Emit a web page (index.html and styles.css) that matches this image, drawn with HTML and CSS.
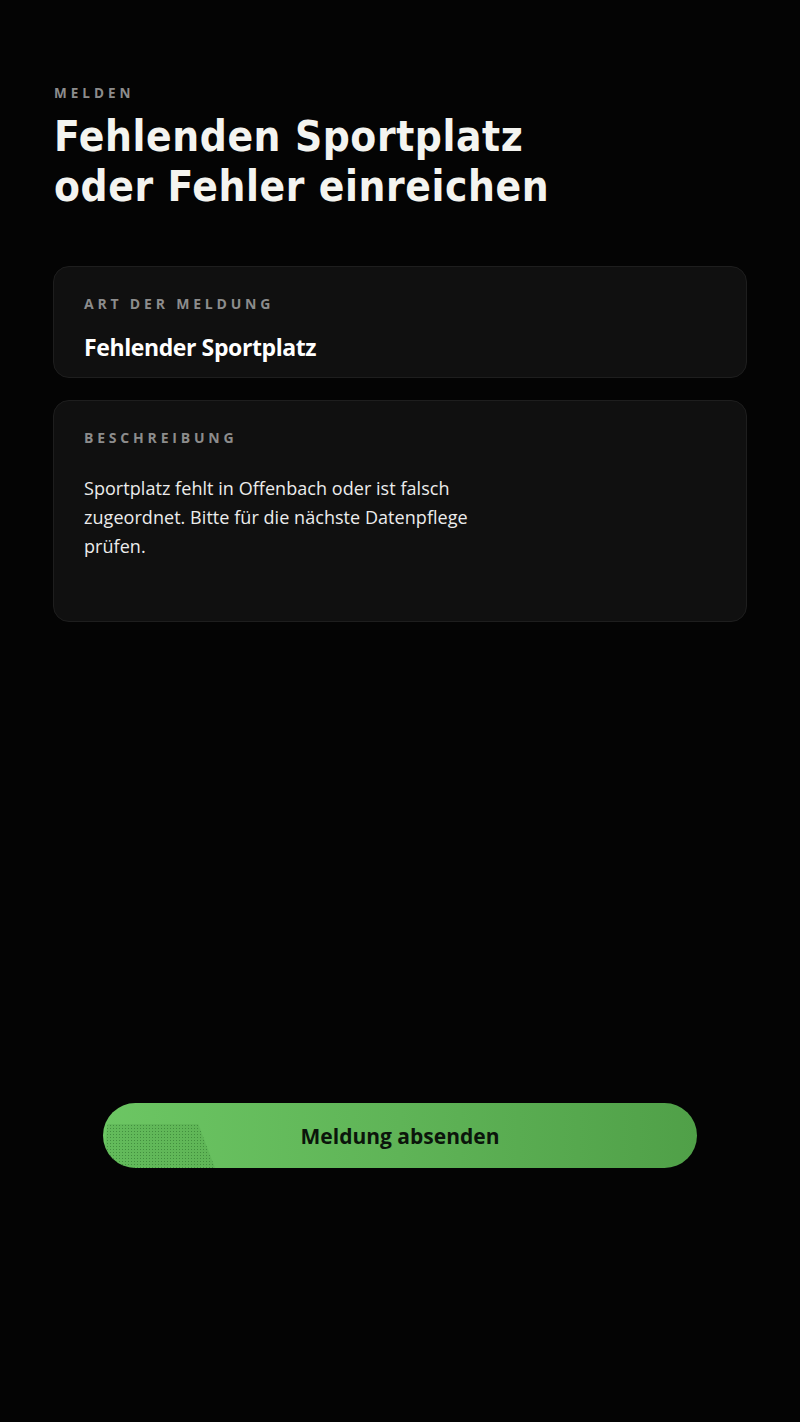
FILE: index.html
```html
<!DOCTYPE html>
<html lang="de">
<head>
<meta charset="utf-8">
<title>Melden</title>
<link rel="stylesheet" href="styles.css">
</head>
<body>
<main class="page">
  <header class="head">
    <div class="eyebrow">MELDEN</div>
    <h1 class="title">Fehlenden Sportplatz<br>oder Fehler einreichen</h1>
  </header>
  <section class="card card-type">
    <div class="label">ART DER MELDUNG</div>
    <div class="value">Fehlender Sportplatz</div>
  </section>
  <section class="card card-desc">
    <div class="label">BESCHREIBUNG</div>
    <p class="desc">Sportplatz fehlt in Offenbach oder ist falsch zugeordnet. Bitte für die nächste Datenpflege prüfen.</p>
  </section>
  <div class="actions">
    <button class="submit" type="button"><span class="shine"></span><span class="submit-text">Meldung absenden</span></button>
  </div>
</main>
</body>
</html>
```

FILE: styles.css
```css
html, body {
  margin: 0;
  padding: 0;
  background: #040404;
}
body {
  font-family: "Open Sans", "Noto Sans", sans-serif;
  color: #f2f2f0;
}
.page {
  box-sizing: border-box;
  min-height: 1422px;
  padding: 84px 53px 254px 53px;
  display: flex;
  flex-direction: column;
}
.head {
  padding-left: 1px;
}
.eyebrow {
  font-family: "Open Sans", sans-serif;
  font-weight: 700;
  font-size: 13.5px;
  letter-spacing: 4px;
  color: #8c8c8c;
  line-height: 18px;
}
.title {
  margin: 10px 0 0 0;
  font-family: "DejaVu Sans Condensed", "DejaVu Sans", sans-serif;
  font-weight: 700;
  font-size: 42px;
  line-height: 50px;
  letter-spacing: 0.6px;
  color: #f4f4f0;
}
.card {
  background: #101010;
  border: 1px solid #1e1e1e;
  border-radius: 16px;
  padding: 28px 30px;
}
.card-type {
  margin-top: 54px;
  padding-bottom: 15px;
}
.card-desc {
  margin-top: 22px;
  min-height: 164px;
}
.label {
  font-weight: 700;
  font-size: 14px;
  letter-spacing: 3.8px;
  color: #8c8c8c;
  line-height: 18px;
}
.value {
  margin-top: 19px;
  font-weight: 700;
  font-size: 23px;
  letter-spacing: -0.4px;
  line-height: 30px;
  color: #ffffff;
}
.desc {
  margin: 27px 0 0 0;
  max-width: 410px;
  font-size: 18px;
  line-height: 29px;
  letter-spacing: 0.05px;
  color: #ececec;
}
.actions {
  margin-top: auto;
  display: flex;
  justify-content: center;
}
.submit {
  position: relative;
  overflow: hidden;
  width: 594px;
  height: 65px;
  border: none;
  border-radius: 33px;
  background: linear-gradient(90deg, #6cc663 0%, #5fb457 50%, #50a048 100%);
  display: flex;
  align-items: center;
  justify-content: center;
  cursor: pointer;
  padding: 0;
}
.shine {
  position: absolute;
  left: 0;
  top: 21px;
  width: 112px;
  height: 44px;
  clip-path: polygon(4% 0, 85% 0, 100% 100%, 0 100%);
  background-color: rgba(60, 140, 55, 0.18);
  background-image: radial-gradient(rgba(40, 110, 40, 0.55) 0.6px, transparent 0.9px);
  background-size: 3px 3px;
}
.submit-text {
  position: relative;
  font-family: "Open Sans", sans-serif;
  font-weight: 700;
  font-size: 21px;
  letter-spacing: 0px;
  color: #0b150b;
}
```
